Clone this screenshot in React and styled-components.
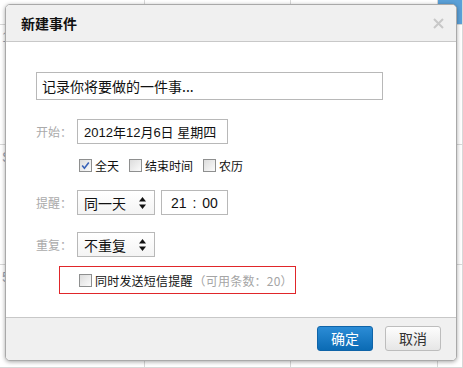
import React from "react";
import styled, { createGlobalStyle } from "styled-components";

const Global = createGlobalStyle`
  html, body { margin: 0; padding: 0; }
  body {
    width: 463px; height: 368px; overflow: hidden; background: #fff;
    font-family: "Noto Sans CJK SC", "Noto Sans", sans-serif;
  }
`;

const Page = styled.div`
  position: relative;
  width: 463px;
  height: 368px;
  overflow: hidden;
  background: #fff;
`;

const CalGrid = styled.div`
  display: grid;
  grid-template-columns: 145px 146px 147px 25px;
  grid-template-rows: 25px 120px 120px 103px;
  height: 368px;
`;

const CalCell = styled.div`
  border-right: 1px solid #d8d8d8;
  border-bottom: 1px solid #d8d8d8;
  background: ${(p) => (p.$blue ? "#5aa0d8" : "#fff")};
  color: #9aa4b4;
  font-family: "Liberation Sans", sans-serif;
  font-size: 14px;
  padding: 4px 0 0 2px;
  box-sizing: border-box;
`;

const Dialog = styled.div`
  position: absolute;
  left: 5px;
  top: 4px;
  width: 452px;
  height: 357px;
  box-sizing: border-box;
  border: 1px solid #a9a9a9;
  border-radius: 5px;
  background: #fff;
  box-shadow: 0 1px 4px rgba(0, 0, 0, 0.35);
  display: flex;
  flex-direction: column;
  overflow: hidden;
  white-space: nowrap;
`;

const Header = styled.div`
  height: 37px;
  flex: none;
  box-sizing: border-box;
  background: #f0f0f0;
  border-bottom: 1px solid #c8c8c8;
  display: flex;
  align-items: center;
  justify-content: space-between;
  padding: 0 12px 0 15px;
`;

const Title = styled.div`
  font-size: 14px;
  font-weight: 700;
  color: #111;
`;

const Close = styled.div`
  width: 12px;
  height: 12px;
  display: flex;
  align-items: center;
  justify-content: center;
`;

const Body = styled.div`
  flex: 1;
  padding: 30px 0 0 30px;
  display: flex;
  flex-direction: column;
`;

const MainInput = styled.div`
  width: 347px;
  height: 28px;
  box-sizing: border-box;
  border: 1px solid #b8b8b8;
  font-size: 14px;
  color: #111;
  display: flex;
  align-items: center;
  padding-left: 5px;
`;

const Row = styled.div`
  display: flex;
  align-items: center;
  margin-top: ${(p) => p.$mt}px;
  padding-left: ${(p) => p.$pl || 0}px;
`;

const Label = styled.div`
  width: 41px;
  flex: none;
  font-size: 12px;
  color: #aaa;
`;

const Box = styled.div`
  height: 25px;
  width: ${(p) => p.$w}px;
  flex: none;
  box-sizing: border-box;
  border: 1px solid #b8b8b8;
  display: flex;
  align-items: center;
  justify-content: ${(p) => (p.$center ? "center" : "space-between")};
  padding: 0 ${(p) => (p.$center ? 0 : 8)}px 0 ${(p) => (p.$center ? 0 : 6)}px;
  margin-left: ${(p) => p.$ml || 0}px;
  font-size: 14px;
  color: #111;
  background: ${(p) => (p.$select ? "linear-gradient(#fff, #f4f4f4)" : "#fff")};
`;

const DateText = styled.span`
  font-family: "Liberation Sans", "Noto Sans CJK SC", sans-serif;
  font-size: 13px;
`;

const TimeText = styled.span`
  font-family: "Liberation Sans", "Noto Sans CJK SC", sans-serif;
  font-size: 14px;
  word-spacing: 2px;
  color: #111;
`;

const Check = styled.span`
  width: 11px;
  height: 11px;
  flex: none;
  border: 1px solid #8e8f8f;
  background: linear-gradient(135deg, #dcdcdc, #fbfbfb);
  display: inline-flex;
  align-items: center;
  justify-content: center;
  margin-right: 3px;
`;

const CheckItem = styled.label`
  display: flex;
  align-items: center;
  font-size: 12px;
  color: #111;
  margin-right: ${(p) => p.$mr || 0}px;
`;

const SmsBox = styled.div`
  margin-top: 9px;
  margin-left: 23px;
  width: 237px;
  height: 28px;
  box-sizing: border-box;
  border: 1px solid #e0262a;
  display: flex;
  align-items: center;
  padding-left: 19px;
  font-size: 12px;
  letter-spacing: 0.2px;
  color: #111;
`;

const SmsText = styled.span`
  color: #111;
`;

const Muted = styled.span`
  color: #a5a5a5;
  margin-left: 1px;
`;

const Footer = styled.div`
  height: 43px;
  flex: none;
  box-sizing: border-box;
  background: #f0f0f0;
  border-top: 1px solid #c8c8c8;
  display: flex;
  align-items: center;
  justify-content: flex-end;
  padding: 0 15px 2px 0;
  gap: 12px;
`;

const Button = styled.button`
  width: 56px;
  height: 25px;
  border-radius: 3px;
  font-family: "Noto Sans CJK SC", sans-serif;
  font-size: 14px;
  padding: 0;
  border: 1px solid ${(p) => (p.$primary ? "#0f64a8" : "#bdbdbd")};
  color: ${(p) => (p.$primary ? "#fff" : "#333")};
  background: ${(p) =>
    p.$primary
      ? "linear-gradient(#2b8cd6, #0b6bb4)"
      : "linear-gradient(#fdfdfd, #e6e6e6)"};
`;

const Arrows = () => (
  <svg width="7" height="12" viewBox="0 0 7 12">
    <path d="M3.5 0 L7 4.5 L0 4.5 Z" fill="#111" />
    <path d="M3.5 12 L7 7.5 L0 7.5 Z" fill="#111" />
  </svg>
);

const Tick = () => (
  <svg width="9" height="9" viewBox="0 0 9 9">
    <path d="M1.2 4.6 L3.4 7.2 L7.8 1.4" stroke="#3a63b8" strokeWidth="1.6" fill="none" />
  </svg>
);

export default function App() {
  return (
    <Page>
      <Global />
      <CalGrid>
        <CalCell />
        <CalCell />
        <CalCell />
        <CalCell $blue />
        <CalCell>1</CalCell>
        <CalCell />
        <CalCell />
        <CalCell />
        <CalCell>S</CalCell>
        <CalCell />
        <CalCell />
        <CalCell />
        <CalCell>5</CalCell>
        <CalCell>26</CalCell>
        <CalCell>27</CalCell>
        <CalCell />
      </CalGrid>
      <Dialog>
        <Header>
          <Title>新建事件</Title>
          <Close>
            <svg width="11" height="11" viewBox="0 0 11 11">
              <path d="M1 1 L10 10 M10 1 L1 10" stroke="#c8c8c8" strokeWidth="2" />
            </svg>
          </Close>
        </Header>
        <Body>
          <MainInput>记录你将要做的一件事...</MainInput>
          <Row $mt={19}>
            <Label>开始：</Label>
            <Box $w={151}>
              <DateText>2012年12月6日 星期四</DateText>
            </Box>
          </Row>
          <Row $mt={13} $pl={43}>
            <CheckItem $mr={10}>
              <Check>
                <Tick />
              </Check>
              全天
            </CheckItem>
            <CheckItem $mr={10}>
              <Check />
              结束时间
            </CheckItem>
            <CheckItem>
              <Check />
              农历
            </CheckItem>
          </Row>
          <Row $mt={16}>
            <Label>提醒：</Label>
            <Box $w={78} $select>
              同一天
              <Arrows />
            </Box>
            <Box $w={67} $center $ml={6}>
              <TimeText>21 : 00</TimeText>
            </Box>
          </Row>
          <Row $mt={17}>
            <Label>重复：</Label>
            <Box $w={78} $select>
              不重复
              <Arrows />
            </Box>
          </Row>
          <SmsBox>
            <Check />
            <SmsText>同时发送短信提醒</SmsText>
            <Muted>（可用条数：20）</Muted>
          </SmsBox>
        </Body>
        <Footer>
          <Button $primary>确定</Button>
          <Button>取消</Button>
        </Footer>
      </Dialog>
    </Page>
  );
}
